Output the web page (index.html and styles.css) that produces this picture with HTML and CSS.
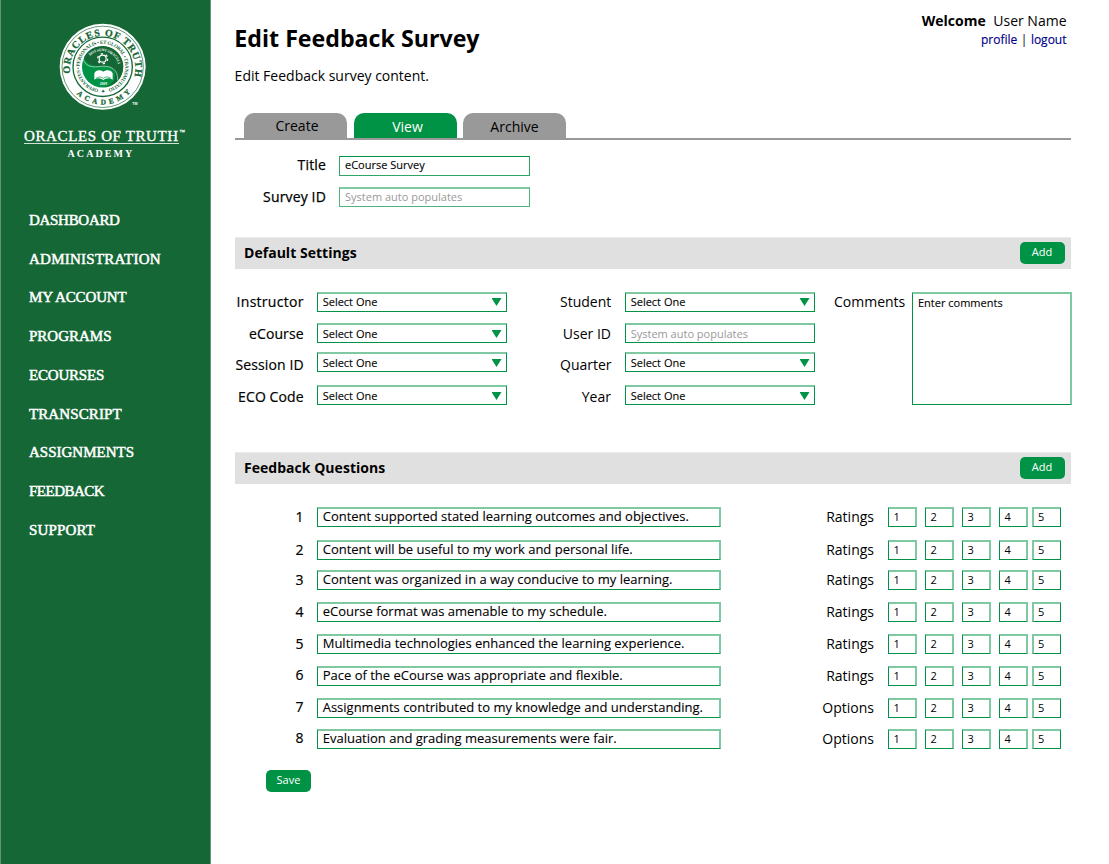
FILE: index.html
```html
<!DOCTYPE html>
<html lang="en">
<head>
<meta charset="utf-8">
<title>Edit Feedback Survey</title>
<link rel="stylesheet" href="styles.css">
</head>
<body>
<div class="page">
  <aside class="sidebar">
    <svg class="seal" viewBox="0 0 315 315" width="105" height="105">
      <defs>
        <path id="arcTop" d="M61 175 A98 98 0 1 1 255 175"/>
        <path id="arcBottom" d="M77 234 A113 113 0 0 0 242 231"/>
        <path id="arcMid" d="M145.500 222.400 A68.500 68.500 0 1 1 171.500 222"/>
        <path id="arcInner" d="M120 122 A51 51 0 0 1 205 168"/>
      </defs>
      <circle cx="158" cy="155.500" r="129" fill="#fff"/>
      <circle cx="158" cy="155.500" r="122" fill="none" stroke="#166736" stroke-width="2"/>
      <circle cx="158" cy="155.500" r="89" fill="none" stroke="#166736" stroke-width="4"/>
      <circle cx="158" cy="155.500" r="62" fill="#009345"/>
      <path d="M102 127 A62 62 0 1 1 158 217 C188 217 207 180 188 162 C174 147 145 158 125 150 C112 145 105 137 102 127Z" fill="#166736"/>
      <path d="M99 132 C108 158 130 157 154 154 C184 151 205 165 203 196" fill="none" stroke="#a6d6ba" stroke-width="2.500"/>
      <g fill="none" stroke="#fff">
        <circle cx="158" cy="131" r="10.500" stroke-width="3.500"/>
        <circle cx="158" cy="131" r="15" stroke-width="4" stroke-dasharray="7 8.700"/>
      </g>
      <path d="M133 175 C137 164 151 163 160 170 C169 163 184 164 188 175 L188 194 C178 188 168 189 160 196 C152 189 142 188 133 194Z" fill="#fff"/>
      <path d="M139 189 C147 184 155 186 160 190 C166 185 174 184 182 189" fill="none" stroke="#009345" stroke-width="2"/>
      <g class="seal-text">
        <text class="seal-name"><textPath href="#arcTop" textLength="345">ORACLES OF TRUTH</textPath></text>
        <text class="seal-academy"><textPath href="#arcBottom" startOffset="4" textLength="180">ACADEMY</textPath></text>
        <text class="seal-motto"><textPath href="#arcMid" textLength="400">OPERANTES • PERSONALIS • ET GLOBAL • TRANSMUTATIO</textPath></text>
        <text class="seal-motto" x="152" y="235">✦</text>
        <text class="seal-inner"><textPath href="#arcInner" textLength="106">HOS SUNT ORACULI</textPath></text>
        <text class="seal-inner" x="149" y="209">2009</text>
        <text class="seal-tm" x="247" y="270">TM</text>
      </g>
    </svg>
    <div class="wordmark">
      <div class="wordmark-name"><span>ORACLES OF TRUTH</span><sup>™</sup></div>
      <div class="wordmark-sub">ACADEMY</div>
    </div>
    <nav class="nav">
      <a class="n1">DASHBOARD</a>
      <a class="n2">ADMINISTRATION</a>
      <a class="n3">MY ACCOUNT</a>
      <a class="n4">PROGRAMS</a>
      <a class="n5">ECOURSES</a>
      <a class="n6">TRANSCRIPT</a>
      <a class="n7">ASSIGNMENTS</a>
      <a class="n8">FEEDBACK</a>
      <a class="n9">SUPPORT</a>
    </nav>
  </aside>

  <main class="main">
    <header class="header">
      <div>
        <h1>Edit Feedback Survey</h1>
        <p class="intro">Edit Feedback survey content.</p>
      </div>
      <div class="account">
        <div class="welcome"><b>Welcome</b><span>User Name</span></div>
        <div class="links"><a>profile</a><span>|</span><a>logout</a></div>
      </div>
    </header>

    <div class="tabs">
      <div class="tab tab-create">Create</div>
      <div class="tab tab-view">View</div>
      <div class="tab tab-archive">Archive</div>
    </div>

    <section class="identity">
      <div class="identity-row"><label>Title</label><div class="field field-title">eCourse Survey</div></div>
      <div class="identity-row"><label>Survey ID</label><div class="field field-id muted">System auto populates</div></div>
    </section>

    <div class="bar"><h2>Default Settings</h2><div class="button">Add</div></div>

    <section class="settings">
      <div class="settings-col settings-left">
        <label class="wide">Instructor</label><div class="field first">Select One<i class="arrow"></i></div>
        <label>eCourse</label><div class="field">Select One<i class="arrow"></i></div>
        <label>Session ID</label><div class="field">Select One<i class="arrow"></i></div>
        <label>ECO Code</label><div class="field">Select One<i class="arrow"></i></div>
      </div>
      <div class="settings-col settings-mid">
        <label>Student</label><div class="field first">Select One<i class="arrow"></i></div>
        <label>User ID</label><div class="field muted">System auto populates</div>
        <label>Quarter</label><div class="field">Select One<i class="arrow"></i></div>
        <label>Year</label><div class="field">Select One<i class="arrow"></i></div>
      </div>
      <div class="comments">
        <label>Comments</label><div class="comments-box">Enter comments</div>
      </div>
    </section>

    <div class="bar"><h2>Feedback Questions</h2><div class="button">Add</div></div>

    <section class="questions">
      <div class="question"><span class="num">1</span><div class="field">Content supported stated learning outcomes and objectives.</div><span class="kind">Ratings</span><div class="scale"><i>1</i><i>2</i><i>3</i><i>4</i><i>5</i></div></div>
      <div class="question"><span class="num">2</span><div class="field">Content will be useful to my work and personal life.</div><span class="kind">Ratings</span><div class="scale"><i>1</i><i>2</i><i>3</i><i>4</i><i>5</i></div></div>
      <div class="question"><span class="num">3</span><div class="field">Content was organized in a way conducive to my learning.</div><span class="kind">Ratings</span><div class="scale"><i>1</i><i>2</i><i>3</i><i>4</i><i>5</i></div></div>
      <div class="question"><span class="num">4</span><div class="field">eCourse format was amenable to my schedule.</div><span class="kind">Ratings</span><div class="scale"><i>1</i><i>2</i><i>3</i><i>4</i><i>5</i></div></div>
      <div class="question"><span class="num">5</span><div class="field">Multimedia technologies enhanced the learning experience.</div><span class="kind">Ratings</span><div class="scale"><i>1</i><i>2</i><i>3</i><i>4</i><i>5</i></div></div>
      <div class="question"><span class="num num-high">6</span><div class="field">Pace of the eCourse was appropriate and flexible.</div><span class="kind">Ratings</span><div class="scale"><i>1</i><i>2</i><i>3</i><i>4</i><i>5</i></div></div>
      <div class="question"><span class="num num-high">7</span><div class="field">Assignments contributed to my knowledge and understanding.</div><span class="kind">Options</span><div class="scale"><i>1</i><i>2</i><i>3</i><i>4</i><i>5</i></div></div>
      <div class="question"><span class="num num-high">8</span><div class="field">Evaluation and grading measurements were fair.</div><span class="kind">Options</span><div class="scale"><i>1</i><i>2</i><i>3</i><i>4</i><i>5</i></div></div>
    </section>
    <div class="button save">Save</div>
  </main>
</div>
</body>
</html>
```
FILE: styles.css
```css
* { box-sizing: border-box; }
body {
  margin: 0;
  background: #fff;
  color: #000;
  font: 14px/20px "Open Sans", "Noto Sans", sans-serif;
}
h1, h2, p { margin: 0; }
.page { display: flex; width: 1109px; height: 864px; overflow: hidden; }

/* Sidebar */
.sidebar {
  width: 211px;
  height: 864px;
  background: #166736;
  border: solid #5c9672;
  border-width: 0 1px;
  color: #fff;
  font-family: "Liberation Serif", serif;
}
.seal { display: block; margin: 15px 0 0 49px; overflow: visible; }
.seal-text { font-family: "Liberation Serif", serif; font-weight: bold; fill: #166736; }
.seal-name { font-size: 30px; stroke: #166736; stroke-width: 0.8px; }
.seal-academy { font-size: 22px; stroke: #166736; stroke-width: 0.8px; }
.seal-motto { font-size: 15px; }
.seal-inner { font-size: 11px; fill: #fff; }
.seal-tm { font: bold 11px "Liberation Sans", sans-serif; fill: #fff; }
.wordmark { padding: 8px 0 0 23px; height: 48px; }
.wordmark-name {
  display: flex;
  width: 162px;
  font-size: 15px;
  line-height: 16px;
  white-space: nowrap;
  -webkit-text-stroke: 0.35px #fff;
}
.wordmark-name span { width: 155px; height: 16px; letter-spacing: 0.63px; border-bottom: 1px solid #d0e1d7; }
.wordmark-name sup { font: 6px/6px "Liberation Sans", sans-serif; margin-top: 1px; -webkit-text-stroke: 0.2px #fff; }
.wordmark-sub {
  margin: 4px 0 0 43.500px;
  font-size: 10px;
  line-height: 12px;
  font-weight: bold;
  letter-spacing: 2.1px;
}
.nav { display: flex; flex-direction: column; padding: 41.900px 0 0 28px; }
.nav a {
  height: 38.750px;
  font-size: 15px;
  line-height: 20px;
  white-space: nowrap;
  -webkit-text-stroke: 0.5px #fff;
}
.n1 { letter-spacing: -0.3px; }
.n2 { letter-spacing: 0.25px; }
.n3 { letter-spacing: -0.15px; }
.n5 { letter-spacing: -0.2px; }
.n6 { letter-spacing: 0.1px; }
.n8 { letter-spacing: -0.5px; }
.n9 { letter-spacing: 0.15px; }

/* Content */
.main { width: 837px; padding-left: 1px; margin-left: 23px; }
.header { display: flex; justify-content: space-between; height: 113px; }
h1 { margin: 23px 0 0 -0.700px; font-size: 23.200px; line-height: 30px; }
.intro { margin-top: 13px; margin-left: -0.400px; }
.account { padding: 11px 4.500px 0 0; }
.welcome { display: flex; justify-content: flex-end; gap: 7.500px; line-height: 20px; }
.links {
  display: flex;
  justify-content: flex-end;
  gap: 3.500px;
  font-size: 12px;
  line-height: 18px;
}
.links a { color: #00008b; -webkit-text-stroke: 0.15px #00008b; }

.tabs { display: flex; height: 27px; padding-left: 9px; border-bottom: 2px solid #999; gap: 7px; }
.tab {
  width: 103px;
  height: 25px;
  border-radius: 10px 10px 0 0;
  background: #999;
  text-align: center;
  line-height: 27px;
}
.tab-create { line-height: 26px; padding-left: 3px; }
.tab-view { background: #009345; color: #fff; padding-left: 4px; }
.tab-archive { margin-left: -1px; }

label { text-align: right; white-space: nowrap; }
.field {
  display: flex;
  justify-content: space-between;
  width: 190px;
  height: 20px;
  padding-left: 4.700px;
  border: 1px solid #009345;
  border-top: 2px solid #7fc9a2;
  font-size: 11px;
  line-height: 17px;
  white-space: nowrap;
  color: #000;
  -webkit-text-stroke: 0.1px #000;
}
.field.first { line-height: 15px; }
.field.muted { color: #999; -webkit-text-stroke: 0; }

.identity { height: 97px; padding-top: 16px; }
.identity-row { display: grid; grid-template-columns: 91px 191px; column-gap: 13px; height: 31px; }
.identity-row label { line-height: 18px; -webkit-text-stroke: 0.25px #000; letter-spacing: 0.15px; }
.identity-row:last-child label { line-height: 19px; }
.identity-row .field { width: 191px; padding-left: 5px; }
.identity-row .field-title {
  border: 1px solid #2fa667;
  border-top-color: #009345;
  line-height: 16px;
}
.identity-row .field-id { border: 1px solid #4cb37c; border-top: 2px solid #7fc9a2; line-height: 16px; }

.bar {
  display: flex;
  justify-content: space-between;
  align-items: center;
  width: 836px;
  height: 32px;
  padding: 0 6px 2px 9px;
  background: #e0e0e0;
  border-top: 1px solid #ececec;
}
h2 { font-size: 14px; line-height: 20px; letter-spacing: 0.03px; }
.button {
  width: 45px;
  height: 22px;
  border-radius: 5px;
  background: #009345;
  color: #fff;
  font-size: 11px;
  line-height: 20px;
  text-align: center;
}
.bar .button { padding-right: 1px; }

.settings { display: flex; height: 183px; padding-top: 23px; }
.settings-col {
  display: grid;
  grid-template-rows: 31px 29px 33px 20px;
  column-gap: 14px;
  align-items: start;
}
.settings-left { grid-template-columns: 68px 190px; }
.settings-mid { grid-template-columns: 51px 190px; margin-left: 53px; }
.settings-left label { -webkit-text-stroke: 0.2px #000; letter-spacing: 0.1px; margin-right: -0.700px; }
.settings-left label.wide { letter-spacing: 0.28px; }
.settings-col label:nth-of-type(2) { padding-top: 1px; }
.settings-col label:nth-of-type(3) { padding-top: 3px; }
.settings-col label:nth-of-type(4) { padding-top: 2px; }
.arrow {
  width: 10px;
  height: 8px;
  margin: 5px 4.500px 0 0;
  background: #009345;
  clip-path: polygon(0 0, 100% 0, 50% 100%);
}
.first .arrow { margin-top: 4px; }
.comments { display: flex; margin-left: 19px; gap: 7px; }
.comments-box {
  width: 160px;
  height: 113px;
  padding-left: 4.700px;
  border: 1px solid #009345;
  border-top: 2px solid #7fc9a2;
  border-right: 2px solid #7fc9a2;
  font-size: 11px;
  line-height: 18px;
  -webkit-text-stroke: 0.1px #000;
}

.questions {
  display: grid;
  grid-template-rows: 33px 30px 32px 32px 32px 32px 31px 41px;
  padding-top: 23px;
}
.question { display: flex; align-items: flex-start; height: 20px; }
.num { width: 69px; padding-right: 0.500px; text-align: right; -webkit-text-stroke: 0.2px #000; }
.num-high { line-height: 18px; }
.question .field {
  width: 404px;
  margin-left: 13px;
  border-right: 2px solid #7fc9a2;
  font-size: 13px;
  line-height: 15px;
}
.kind { width: 153px; text-align: right; }
.scale { display: flex; margin-left: 14px; gap: 8px; }
.scale i {
  width: 29px;
  height: 20px;
  padding-left: 4.600px;
  border: 1px solid #009345;
  border-top: 2px solid #7fc9a2;
  border-right: 2px solid #7fc9a2;
  font-size: 11px;
  line-height: 16px;
  font-style: normal;
}
.scale i:last-child { margin-left: -4px; border-right: 1px solid #009345; border-left: 2px solid #7fc9a2; padding-left: 4px; }
.save { margin-left: 31px; }
```
